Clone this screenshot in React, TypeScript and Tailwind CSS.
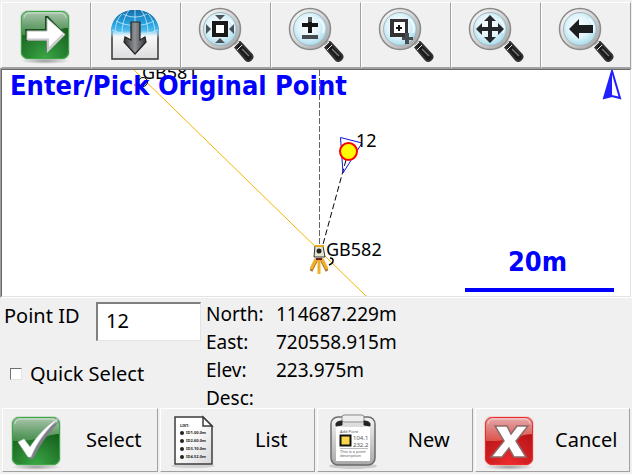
import React from "react";

const FONT = "font-['Noto_Sans',sans-serif]";
const MAP_FONT =
  "font-['DejaVu_Sans_Condensed','DejaVu_Sans',sans-serif] font-bold";

function GlossyTile({ id, light, mid, dark, children }: {
  id: string;
  light: string;
  mid: string;
  dark: string;
  children: React.ReactNode;
}) {
  return (
    <svg viewBox="0 0 60 60" className="h-[60px] w-[60px]" aria-hidden="true">
      <defs>
        <radialGradient id={`${id}-base`} cx="50%" cy="100%" r="75%">
          <stop offset="0" stopColor={mid} />
          <stop offset="1" stopColor={dark} />
        </radialGradient>
        <linearGradient id={`${id}-shine`} x1="0" y1="0" x2="0" y2="1">
          <stop offset="0" stopColor="#fff" stopOpacity="0.65" />
          <stop offset="1" stopColor={light} stopOpacity="0.6" />
        </linearGradient>
        <radialGradient id={`${id}-shadow`}>
          <stop offset="0" stopColor="#000" stopOpacity="0.35" />
          <stop offset="1" stopColor="#000" stopOpacity="0" />
        </radialGradient>
      </defs>
      <ellipse cx="29" cy="57" rx="25" ry="3" fill={`url(#${id}-shadow)`} />
      <rect x="4" y="6" width="50" height="50" rx="8" fill={light} opacity="0.25" />
      <rect x="5" y="7" width="48" height="48" rx="7" fill={`url(#${id}-base)`} />
      <path d="M5 31V14a7 7 0 0 1 7-7h34a7 7 0 0 1 7 7v10C40 24 30 32 5 31z" fill={`url(#${id}-shine)`} />
      <rect x="5.5" y="7.5" width="47" height="47" rx="7" fill="none" stroke={mid} />
      <path d="M8 14a5 5 0 0 1 5-5h32a5 5 0 0 1 5 5" fill="none" stroke="#fff" strokeOpacity="0.5" />
      {children}
    </svg>
  );
}

function NextIcon() {
  return (
    <GlossyTile id="next" light="#5fa564" mid="#3aa845" dark="#17611f">
      <path d="M9 25h20V12l3 0 17 18-19 19V37H10z" fill="#174f1c" />
      <path d="M11 27h20V14l18 16.500-18 18V36H11z" fill="#fff" stroke="#b9bcb9" strokeWidth="1" />
      <path d="M12 35.500h20v10l15-15" fill="none" stroke="#c9c9cf" strokeWidth="2" />
    </GlossyTile>
  );
}

function SelectIcon() {
  return (
    <GlossyTile id="select" light="#5fa564" mid="#3aa845" dark="#17611f">
      <path d="M13 34l5-3 6 8C32 27 41 16 53 11 43 21 34 33 26 49h-3z" fill="#7d8089" />
      <path d="M11 32l6-3 6 8C31 25 39 16 52 8 40 19 30 32 24 47h-3z" fill="#fff" stroke="#c8c8cc" strokeWidth="0.600" />
    </GlossyTile>
  );
}

function CancelIcon() {
  return (
    <GlossyTile id="cancel" light="#ee7a6c" mid="#ee2b2e" dark="#b81518">
      <path d="M15 16h12l4 8 6-8h11L36 31l10 16H34l-5-9-7 9H11l13-16z" fill="#fff" stroke="#8d6a6a" strokeWidth="1.500" />
    </GlossyTile>
  );
}

function GlobeIcon() {
  return (
    <svg viewBox="0 0 60 60" className="h-[60px] w-[60px]" aria-hidden="true">
      <defs>
        <linearGradient id="globe" x1="0" y1="0" x2="0" y2="1">
          <stop offset="0" stopColor="#1470aa" />
          <stop offset="0.500" stopColor="#28a4e2" />
          <stop offset="0.750" stopColor="#55bdec" />
          <stop offset="1" stopColor="#fff" stopOpacity="0" />
        </linearGradient>
        <linearGradient id="globe-arrow">
          <stop offset="0" stopColor="#333" />
          <stop offset="0.500" stopColor="#909296" />
          <stop offset="1" stopColor="#303236" />
        </linearGradient>
        <linearGradient id="globe-body" x1="0" y1="0" x2="0" y2="1">
          <stop offset="0.400" stopColor="#fff" />
          <stop offset="1" stopColor="#dcdcde" />
        </linearGradient>
      </defs>
      <path d="M6 55V29C6 14 16 7 29 7s23 7 23 22v26z" fill="url(#globe-body)" stroke="#333" strokeWidth="1.500" />
      <path d="M5 34V28C5 14 15 6 29 6s24 8 24 22v6z" fill="url(#globe)" />
      <g fill="none" stroke="#c6ebfb" strokeWidth="0.800">
        <path d="M29 6v25M23 6c-5 7-7 15-7 25M35 6c5 7 7 15 7 25M16 10c-5 5-7 12-7 21M42 10c5 5 7 12 7 21" />
        <path d="M17 10c7 4 17 4 24 0M10 17c11 6 27 6 38 0M6 26c13 6 33 6 46 0" />
      </g>
      <path d="M25 18h9v18l5-3 1 5-11 12-11-12 1-5 6 3z" fill="url(#globe-arrow)" stroke="#222" strokeWidth="1.200" />
    </svg>
  );
}

function Magnifier({ id, children }: { id: string; children: React.ReactNode }) {
  return (
    <svg viewBox="0 0 60 60" className="h-[60px] w-[60px]" aria-hidden="true">
      <defs>
        <linearGradient id={`${id}-rim`} x1="0" y1="0" x2="1" y2="1">
          <stop offset="0" stopColor="#fff" />
          <stop offset="0.500" stopColor="#d4d4d4" />
          <stop offset="1" stopColor="#9c9c9c" />
        </linearGradient>
        <radialGradient id={`${id}-glass`} cx="45%" cy="42%" r="60%">
          <stop offset="0" stopColor="#fff" />
          <stop offset="0.550" stopColor="#e2f4fa" />
          <stop offset="1" stopColor="#a5daea" />
        </radialGradient>
      </defs>
      <path d="M38 40l4-4 3 3-4 4z" fill="#bbb" />
      <path d="M39 43l5-5 12 13c2 3-3 8-6 5z" fill="#1b1b1b" stroke="#333" strokeWidth="2" strokeLinejoin="round" />
      <path d="M38 43l5-5M41 46l5-5" stroke="#eee" strokeWidth="1" />
      <path d="M46 45l7 7" stroke="#777" strokeWidth="1.500" />
      <circle cx="24" cy="25" r="20.500" fill={`url(#${id}-rim)`} stroke="#8a8a8a" strokeWidth="1.500" />
      <circle cx="24" cy="25" r="16.500" fill={`url(#${id}-glass)`} stroke="#a3b6bc" />
      <path d="M33 15c4 3 6 8 4 14" fill="none" stroke="#fff" strokeWidth="2" opacity="0.800" />
      {children}
    </svg>
  );
}

function ZoomExtentsIcon() {
  return (
    <Magnifier id="extents">
      <path d="M16 17h16v16H16z" fill="#191919" />
      <path d="M20 21h8v8h-8z" fill="#fff" />
      <path d="M19 11h10l-5 5zM19 39h10l-5-5zM10 20v10l5-5zM38 20v10l-5-5z" fill="#4b5257" />
    </Magnifier>
  );
}

function ZoomInOutIcon() {
  return (
    <Magnifier id="inout">
      <path d="M22 13h4v6h6v4h-6v6h-4v-6h-6v-4h6z" fill="#151515" />
      <path d="M22 13h4v5h-4z" fill="#555" />
      <path d="M16 31h16v4H16z" fill="#454b4e" />
    </Magnifier>
  );
}

function ZoomWindowIcon() {
  return (
    <Magnifier id="window">
      <path d="M14 15h18v18H14z" fill="#333" />
      <path d="M18 18h11v11H18z" fill="#fff" />
      <path d="M22 21h2v2h2v2h-2v2h-2v-2h-2v-2h2z" fill="#111" />
      <path d="M29 29h4v4h4v3h-4v4h-4v-4h-3v-3h3z" fill="#454b4e" />
    </Magnifier>
  );
}

function PanIcon() {
  return (
    <Magnifier id="pan">
      <path d="M24 11l6 6h-4v6h6v-4l6 6-6 6v-4h-6v6h4l-6 6-6-6h4v-6h-6v4l-6-6 6-6v4h6v-6h-4z" fill="#24282a" />
    </Magnifier>
  );
}

function ZoomPreviousIcon() {
  return (
    <Magnifier id="previous">
      <path d="M13 25l10-10v6h14v8H23v6z" fill="#1c1e20" />
    </Magnifier>
  );
}

function ListIcon() {
  return (
    <svg viewBox="0 0 60 60" className="h-[60px] w-[60px]" aria-hidden="true">
      <defs>
        <linearGradient id="sheet" x1="0" y1="0" x2="1" y2="1">
          <stop offset="0.400" stopColor="#fff" />
          <stop offset="1" stopColor="#d6d6d6" />
        </linearGradient>
      </defs>
      <ellipse cx="28" cy="56" rx="22" ry="2" fill="#000" opacity="0.120" />
      <path d="M10 7h28l9 9v38H10z" fill="url(#sheet)" stroke="#3c3c3c" strokeWidth="1.500" />
      <path d="M38 7v9h9z" fill="#fff" stroke="#3c3c3c" strokeWidth="1.500" />
      <g fill="#222" className="font-['Noto_Sans',sans-serif] font-bold">
        <text x="15" y="17" fontSize="4">LIST:</text>
        {["ID1-00.0m", "ID2-60.0m", "ID3-10.0m", "ID4-52.0m"].map((line, i) => (
          <React.Fragment key={line}>
            <circle cx="17" cy={23 + i * 8} r="2" />
            <text x="21" y={24 + i * 8} fontSize="4">{line}</text>
          </React.Fragment>
        ))}
      </g>
    </svg>
  );
}

function NewIcon() {
  return (
    <svg viewBox="0 0 60 60" className="h-[60px] w-[60px]" aria-hidden="true">
      <defs>
        <linearGradient id="board" x1="0" y1="0" x2="0" y2="1">
          <stop offset="0" stopColor="#f4f4f4" />
          <stop offset="1" stopColor="#a8a8a8" />
        </linearGradient>
      </defs>
      <ellipse cx="31" cy="56" rx="24" ry="3" fill="#000" opacity="0.150" />
      <rect x="9" y="7" width="44" height="48" rx="7" fill="url(#board)" stroke="#6b6b6b" strokeWidth="1.500" />
      <rect x="20" y="5" width="22" height="7" rx="2" fill="#eee" stroke="#888" />
      <path d="M14 17h34v34H14z" fill="#fff" />
      <path d="M20 13h22v4H20z" fill="#dcdcdc" />
      <path d="M14 16v-2c0-2 3-3 6-3v4zM48 16v-2c0-2-3-3-6-3v4z" fill="#222" stroke="#222" strokeWidth="1" />
      <path d="M18.500 25.500h10v10h-10z" fill="#fbd648" stroke="#111" strokeWidth="2" />
      <g fill="#555" className="font-['Noto_Sans',sans-serif]">
        <text x="18" y="23" fontSize="4">Add Point</text>
        <text x="31" y="30" fontSize="6">104.1</text>
        <text x="31" y="37" fontSize="6">232.2</text>
        <text x="18" y="43" fontSize="4">This is a point</text>
        <text x="18" y="47" fontSize="4">description</text>
      </g>
      <path d="M18 38.500h28" stroke="#aaa" strokeWidth="0.800" />
    </svg>
  );
}

const tools = [
  { label: "Next", icon: <NextIcon /> },
  { label: "Store to map", icon: <GlobeIcon /> },
  { label: "Zoom extents", icon: <ZoomExtentsIcon /> },
  { label: "Zoom in or out", icon: <ZoomInOutIcon /> },
  { label: "Zoom window", icon: <ZoomWindowIcon /> },
  { label: "Pan", icon: <PanIcon /> },
  { label: "Zoom previous", icon: <ZoomPreviousIcon /> },
];

const actions = [
  { label: "Select", icon: <SelectIcon /> },
  { label: "List", icon: <ListIcon /> },
  { label: "New", icon: <NewIcon /> },
  { label: "Cancel", icon: <CancelIcon /> },
];

const coordinates = [
  { name: "North:", value: "114687.229m" },
  { name: "East:", value: "720558.915m" },
  { name: "Elev:", value: "223.975m" },
  { name: "Desc:", value: "" },
];

function MapView() {
  return (
    <div className="min-h-0 flex-1 border border-t-[#a0a0a0] border-r-white border-b-white border-l-[#a0a0a0]">
      <div className="relative h-full overflow-hidden border border-t-[#696969] border-r-[#e3e3e3] border-b-[#e3e3e3] border-l-[#696969] bg-white">
        <svg
          viewBox="2 70 628 226"
          preserveAspectRatio="xMidYMid slice"
          className="h-full w-full"
        >
          <path d="M134 70L366 296" stroke="#f5b400" strokeWidth="1" />
          <path d="M319.500 70V246" stroke="#666" strokeWidth="1" strokeDasharray="6 2" />
          <path d="M346 160L322 248" stroke="#000" strokeWidth="1" strokeDasharray="6 3" />
          <path d="M340.500 137.500L362 143L343 173z" fill="none" stroke="#1010e0" strokeWidth="1" />
          <circle cx="143" cy="82" r="4.500" fill="#fff" stroke="#000" />
          <path d="M134 85h4" stroke="#e00" strokeWidth="1" />
          <circle cx="348.500" cy="151.500" r="8.500" fill="#ff0" stroke="#f00" strokeWidth="2" />
          {/* instrument on its tripod */}
          <path d="M317 259l-6 12M321 259l6 12" stroke="#a8742a" strokeWidth="3" />
          <path d="M316 259l-5 10M322 259l5 10M319 259v15" stroke="#eeb02c" strokeWidth="3" />
          <path d="M314 257l1-11h8l2 11z" fill="#e6e6d0" stroke="#333" />
          <path d="M315 246h9" stroke="#e0a820" strokeWidth="2" />
          <circle cx="319" cy="251" r="2.500" fill="#222" />
          <path d="M316 259h6" stroke="#702018" strokeWidth="2" />
          <g className={FONT} fill="#000" fontSize="18">
            <text x="142" y="79">GB581</text>
            <text x="356" y="147">12</text>
            <text x="326" y="256">GB582</text>
          </g>
          <path d="M330 258c4 0 4 4 1 6l-2 1" fill="none" stroke="#000" strokeWidth="1.500" />
        </svg>
        <h1 className={`absolute top-0 left-2 text-[27px] leading-8 whitespace-nowrap text-[#0000ff] ${MAP_FONT}`}>
          Enter/Pick Original Point
        </h1>
        <svg viewBox="0 0 20 30" className="absolute top-0 right-2 h-[30px] w-5">
          <path d="M10 1L2 28l8-2z" fill="#2020ff" />
          <path d="M10 1L2 28l8-2 8 2z" fill="none" stroke="#2020ff" strokeWidth="2" />
        </svg>
        <div className={`absolute right-4 bottom-1 w-[149px] border-b-4 border-[#0000ff] pr-1 pb-2.5 text-center text-[27px] leading-8 text-[#0000ff] ${MAP_FONT}`}>
          20m
        </div>
      </div>
    </div>
  );
}

function App() {
  return (
    <main className={`flex h-screen min-h-[474px] flex-col bg-[#f0f0f0] text-[20px] text-black ${FONT}`}>
      <nav className="grid grid-cols-7 px-px pt-0.5">
        {tools.map((tool) => (
          <button
            key={tool.label}
            type="button"
            aria-label={tool.label}
            className="flex h-[66px] items-start justify-center border border-t-white border-r-[#a0a0a0] border-b-[#a0a0a0] border-l-white pt-px"
          >
            {tool.icon}
          </button>
        ))}
      </nav>

      <MapView />

      <section className="flex h-[110px] pt-0.5">
        <div className="w-[206px]">
          <div className="flex h-[42px] items-start pt-0.5 pl-1">
            <label htmlFor="point-id" className="w-[92px] leading-7">
              Point ID
            </label>
            <input
              id="point-id"
              type="text"
              defaultValue="12"
              className="h-[39px] w-[105px] border-t-2 border-r border-b border-l-2 border-t-[#808080] border-r-[#e3e3e3] border-b-[#e3e3e3] border-l-[#808080] bg-white pb-1 pl-2 outline-none"
            />
          </div>
          <label className="mt-4 flex items-center gap-2 pl-2.5 leading-8">
            <input
              type="checkbox"
              className="h-3 w-3 appearance-none border border-t-[#707070] border-r-[#e3e3e3] border-b-[#e3e3e3] border-l-[#707070] bg-white checked:bg-black"
            />
            Quick Select
          </label>
        </div>
        <dl className="text-[19px] leading-7">
          {coordinates.map((item) => (
            <div key={item.name} className="flex">
              <dt className="w-[70px]">{item.name}</dt>
              <dd>{item.value}</dd>
            </div>
          ))}
        </dl>
      </section>

      <footer className="grid grid-cols-4 gap-0.5 px-0.5 pb-0.5">
        {actions.map((action) => (
          <button
            key={action.label}
            type="button"
            className="flex h-16 items-center border border-t-white border-r-[#a0a0a0] border-b-[#a0a0a0] border-l-white pl-1"
          >
            {action.icon}
            <span className="flex-1 pl-1 text-center">{action.label}</span>
          </button>
        ))}
      </footer>
    </main>
  );
}

export default App;
